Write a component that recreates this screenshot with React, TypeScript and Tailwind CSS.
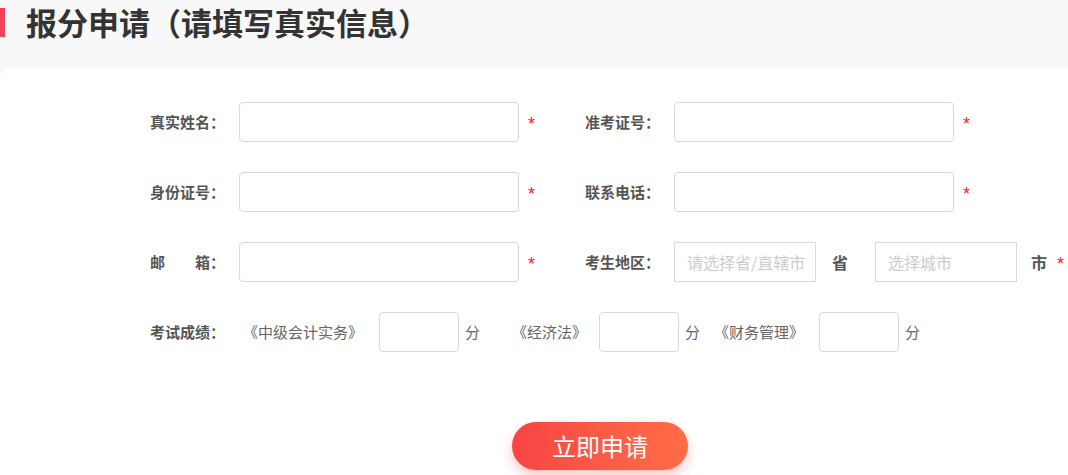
import React from 'react';

const cjk = "font-['Microsoft_YaHei','Noto_Sans_CJK_SC',sans-serif]";

function Star({ gap = 'ml-[9px]' }: { gap?: string }) {
  return (
    <span className={`${gap} text-[18px] leading-none text-[#ff1a1a] font-['Liberation_Sans',sans-serif] translate-y-[2px]`}>
      *
    </span>
  );
}

function Label({ children }: { children: React.ReactNode }) {
  return (
    <span className="w-[89px] shrink-0 text-[15px] font-bold text-[#555] whitespace-pre">{children}</span>
  );
}

function TextField({ label }: { label: string }) {
  return (
    <div className="flex items-center w-[435px]">
      <Label>{label}</Label>
      <input
        type="text"
        className="w-[280px] h-[40px] border border-[#d9d9d9] rounded-[4px] px-3 text-[15px] outline-none"
      />
      <Star />
    </div>
  );
}

export default function App() {
  return (
    <div className={`min-h-screen bg-[#f8f8f8] ${cjk}`}>
      {/* page title */}
      <header className="h-[67px] flex items-start">
        <div className="flex items-center h-[44px]">
          <span className="w-[5px] h-[29px] bg-[#f0435a]" />
          <h1 className="ml-[21px] text-[31px] font-bold text-[#333] leading-[44px]">
            报分申请（请填写真实信息）
          </h1>
        </div>
      </header>

      {/* form card */}
      <main className="bg-white rounded-tl-[10px] pt-[35px] pl-[150px] pb-[20px]">
        <div className="flex flex-col gap-[30px]">
          <div className="flex items-center h-[40px]">
            <TextField label="真实姓名：" />
            <TextField label="准考证号：" />
          </div>
          <div className="flex items-center h-[40px]">
            <TextField label="身份证号：" />
            <TextField label="联系电话：" />
          </div>
          <div className="flex items-center h-[40px]">
            <TextField label={'邮\u3000\u3000箱：'} />
            <div className="flex items-center">
              <Label>考生地区：</Label>
              <select className="appearance-none w-[142px] h-[40px] border border-[#d9d9d9] pl-[12px] text-[16px] text-[#ccc] bg-white outline-none">
                <option>请选择省/直辖市</option>
              </select>
              <span className="ml-[16px] text-[16px] font-bold text-[#555]">省</span>
              <select className="ml-[27px] appearance-none w-[142px] h-[40px] border border-[#d9d9d9] pl-[12px] text-[16px] text-[#ccc] bg-white outline-none">
                <option>选择城市</option>
              </select>
              <span className="ml-[14px] text-[16px] font-bold text-[#555]">市</span>
              <Star gap="ml-[10px]" />
            </div>
          </div>
          <div className="flex items-center h-[40px] text-[15px] text-[#666]">
            <Label>考试成绩：</Label>
            <span className="ml-[4px] w-[136px] shrink-0">《中级会计实务》</span>
            <input className="w-[80px] h-[40px] shrink-0 border border-[#d9d9d9] rounded-[4px] outline-none" />
            <span className="ml-[6px] w-[47px] shrink-0">分</span>
            <span className="w-[87px] shrink-0">《经济法》</span>
            <input className="w-[80px] h-[40px] shrink-0 border border-[#d9d9d9] rounded-[4px] outline-none" />
            <span className="ml-[6px] w-[29px] shrink-0">分</span>
            <span className="w-[105px] shrink-0">《财务管理》</span>
            <input className="w-[80px] h-[40px] shrink-0 border border-[#d9d9d9] rounded-[4px] outline-none" />
            <span className="ml-[6px]">分</span>
          </div>
        </div>

        <button className="mt-[70px] ml-[362px] w-[176px] h-[48px] rounded-full bg-gradient-to-r from-[#f84444] to-[#ff6d46] text-white text-[24px] flex items-center justify-center shadow-[0_6px_12px_rgba(250,70,70,0.3)]">
          立即申请
        </button>
      </main>
    </div>
  );
}
